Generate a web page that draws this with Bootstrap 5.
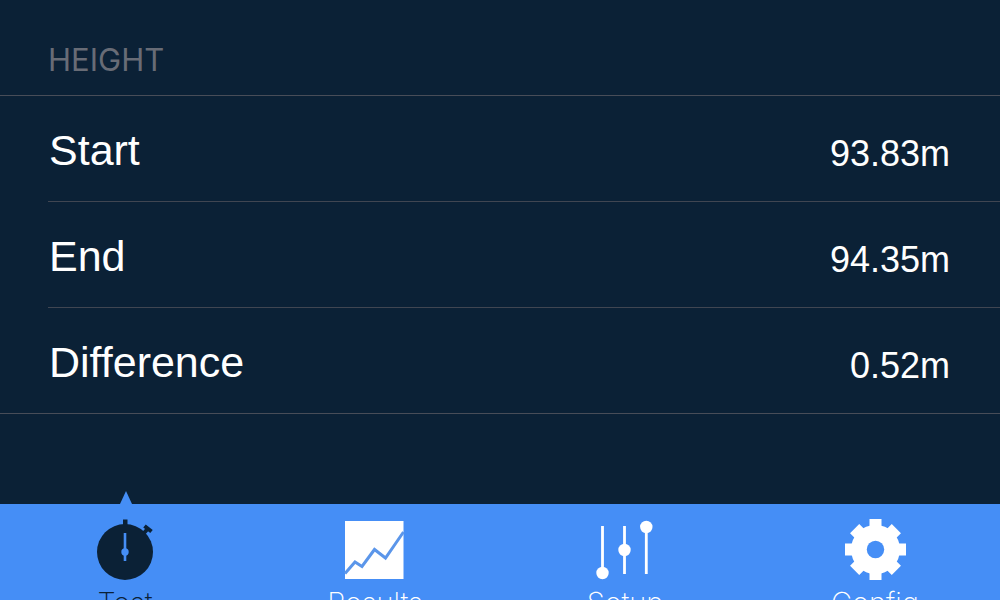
<!DOCTYPE html>
<html lang="en">
<head>
<meta charset="utf-8">
<meta name="viewport" content="width=device-width, initial-scale=1">
<title>Height</title>
<link href="https://cdn.jsdelivr.net/npm/bootstrap@5.3.0/dist/css/bootstrap.min.css" rel="stylesheet">
<style>
  body { background: #0b2136; color: #fff; font-family: "Liberation Sans", Arial, sans-serif; }
  .section-title { color: #686c76; font-family: Inter, "Liberation Sans", sans-serif; font-weight: 400; font-size: 31px; line-height: 40px; padding: 40px 48px 15px; }
  .readings { border-top: 1px solid #484d58; border-bottom: 1px solid #484d58; margin-bottom: 90px; padding-left: 48px; }
  .reading { height: 106px; padding: 3px 50px 0 0; }
  .reading:first-child { height: 105px; }
  .reading + .reading { border-top: 1px solid #404652; }
  .reading-name { font-size: 43px; line-height: 48px; padding-left: 1px; }
  .reading-value { font-size: 36px; line-height: 48px; }
  .tabs { background: #458ef6; }
  .tab { color: #fff; font-family: Inter, "Liberation Sans", sans-serif; font-weight: 200; font-size: 29px; line-height: 32px; padding: 14px 0 8px; }
  .tab svg { width: 64px; height: 64px; margin-bottom: 5px; }
  .tab.active { color: #0b2136; }
  .tab.active::before { content: ""; position: absolute; bottom: 100%; left: 50%; width: 12px; height: 13px; margin-left: -5px; background: #458ef6; clip-path: polygon(50% 0, 100% 100%, 0 100%); }
</style>
</head>
<body>
<div class="vh-100 overflow-hidden">
  <main>
    <h2 class="section-title m-0">HEIGHT</h2>
    <ul class="readings list-unstyled">
      <li class="reading d-flex align-items-center justify-content-between"><span class="reading-name">Start</span><span class="reading-value pt-2">93.83m</span></li>
      <li class="reading d-flex align-items-center justify-content-between"><span class="reading-name">End</span><span class="reading-value pt-2">94.35m</span></li>
      <li class="reading d-flex align-items-center justify-content-between"><span class="reading-name">Difference</span><span class="reading-value pt-2">0.52m</span></li>
    </ul>
  </main>
  <nav class="tabs row g-0" aria-label="Sections">
    <a href="#test" class="tab active col position-relative d-flex flex-column align-items-center text-decoration-none" aria-current="page">
      <svg viewBox="0 0 64 64" aria-hidden="true">
        <circle cx="32" cy="34" r="28" fill="#0b2136"/>
        <path d="M30 1.500h4.500v7H30z" fill="#0b2136"/>
        <path d="M51 15l4-4.500M51.500 8l7 5.500" stroke="#0b2136" stroke-width="4"/>
        <path d="M32 15v28" stroke="#458ef6" stroke-width="2.600"/>
        <circle cx="32" cy="34" r="3.700" fill="#458ef6"/>
      </svg>
      <span>Test</span>
    </a>
    <a href="#results" class="tab col d-flex flex-column align-items-center text-decoration-none">
      <svg viewBox="0 0 64 64" aria-hidden="true">
        <path d="M2 3h58.500v58H2z" fill="#fff"/>
        <path d="M2 55.500L12 44l7 4.500L31.500 31.500 42.500 40 60.500 14" fill="none" stroke="#5b96ea" stroke-width="3"/>
      </svg>
      <span>Results</span>
    </a>
    <a href="#setup" class="tab col d-flex flex-column align-items-center text-decoration-none">
      <svg viewBox="0 0 64 64" fill="#fff" aria-hidden="true">
        <path d="M9.500 8v46M31.500 8v48M53.300 8v48" stroke="#fff" stroke-width="2.800"/>
        <circle cx="9.500" cy="55" r="6.200"/><circle cx="31.500" cy="32" r="6.200"/><circle cx="53.300" cy="9" r="6.200"/>
      </svg>
      <span>Setup</span>
    </a>
    <a href="#config" class="tab col d-flex flex-column align-items-center text-decoration-none">
      <svg viewBox="0 0 64 64" aria-hidden="true">
        <g transform="translate(32.500 31.500)" fill="#fff">
          <circle r="24.500"/>
          <path d="M-6-30.500H6v61H-6zM-30.500-6h61V6h-61z"/>
          <path transform="rotate(45)" d="M-6.500-29.500H6.500v59H-6.500zM-29.500-6.500h59V6.500h-59z"/>
          <circle r="8.700" fill="#458ef6"/>
        </g>
      </svg>
      <span>Config</span>
    </a>
  </nav>
</div>
<script src="https://cdn.jsdelivr.net/npm/bootstrap@5.3.0/dist/js/bootstrap.bundle.min.js"></script>
</body>
</html>
